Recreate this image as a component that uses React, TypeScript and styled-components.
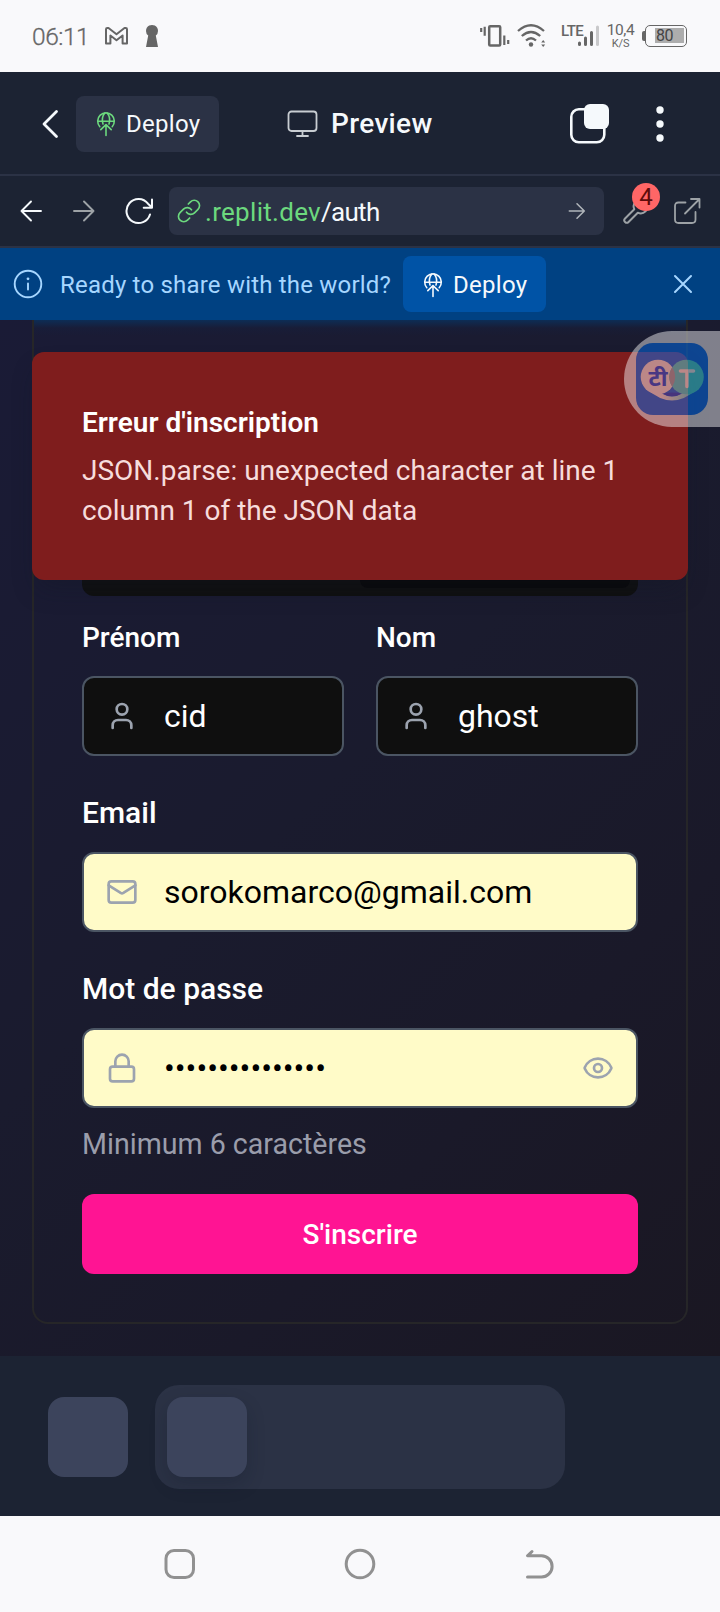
import React from 'react';
import styled, { createGlobalStyle } from 'styled-components';
import { Eye, Lock, Mail, User } from 'lucide-react';

const GlobalStyle = createGlobalStyle`
  * { box-sizing: border-box; }
  body { margin: 0; background: #f9f9fb; font-family: Roboto, "Liberation Sans", sans-serif; }
  svg { display: block; flex: none; }
  p, h1 { margin: 0; }
  button { font: inherit; border: 0; margin: 0; padding: 0; background: none; color: inherit; }
`;

const Screen = styled.div`
  width: 720px;
  height: 1612px;
  display: flex;
  flex-direction: column;
  overflow: hidden;
`;

/* ---------- system status bar ---------- */

const StatusBar = styled.div`
  height: 72px;
  padding: 0 33px 0 32px;
  display: flex;
  align-items: center;
  background: #f9f9fb;
  color: #666;
`;

const Clock = styled.span`
  width: 58px;
  padding-top: 1px;
  font-size: 24.5px;
  line-height: 28px;
  letter-spacing: -0.45px;
  font-weight: 300;
  -webkit-text-stroke: 0.3px #666;
`;

const StatusGroup = styled.div<{ $gap: number; $left?: string }>`
  display: flex;
  align-items: center;
  gap: ${(p) => p.$gap}px;
  margin-left: ${(p) => p.$left ?? '0'};
`;

const Network = styled.div`
  width: 38px;
  height: 24px;
  display: flex;
  align-items: flex-start;
  font-size: 15px;
  line-height: 15px;
  font-weight: 500;
  svg { margin: 1px 0 0 -7px; }
`;

const NetworkLabel = styled.span`
  width: 23px;
  letter-spacing: -0.6px;
`;

const Speed = styled.div`
  width: 27px;
  height: 26px;
  display: flex;
  flex-direction: column;
  align-items: center;
  font-size: 15.5px;
  line-height: 15px;
  font-weight: 400;
  letter-spacing: -0.4px;
  small { font-size: 11px; line-height: 11px; letter-spacing: -0.1px; }
`;

const Battery = styled.div`
  display: flex;
  align-items: center;
  &::before {
    content: '';
    width: 3px;
    height: 10px;
    border-radius: 2px 0 0 2px;
    background: #666;
  }
`;

const BatteryBody = styled.div`
  width: 42px;
  height: 22px;
  padding: 2px 2px 2px 9px;
  border: 1.5px solid #666;
  border-radius: 5px;
`;

const BatteryLevel = styled.div`
  height: 15px;
  padding-left: 1px;
  background: #adadad;
  color: #444;
  font-size: 16px;
  line-height: 15px;
  letter-spacing: -0.4px;
`;

/* ---------- workspace header ---------- */

const Header = styled.header`
  height: 104px;
  padding: 1px 52px 0 40px;
  display: flex;
  align-items: center;
  background: #1c2333;
  border-bottom: 2px solid #2b3245;
  color: #f5f9fc;
`;

const DeployButton = styled.button<{ $primary?: boolean }>`
  width: 143px;
  height: 56px;
  padding: 1px 0 0 20px;
  display: flex;
  align-items: center;
  gap: 10px;
  border-radius: 8px;
  font-size: 24px;
  line-height: 28px;
  letter-spacing: 0.3px;
  color: #f5f9fc;
  background: ${(p) => (p.$primary ? '#0053a6' : '#2b3245')};
`;

const PaneTitle = styled.div`
  margin-left: 68px;
  padding-top: 1px;
  display: flex;
  align-items: center;
  gap: 12px;
  font-size: 28px;
  line-height: 32px;
  font-weight: 500;
  letter-spacing: 0.35px;
  flex: 1;
`;

const HeaderActions = styled.div`
  display: flex;
  align-items: center;
  gap: 42px;
`;

/* ---------- address row ---------- */

const AddressBar = styled.nav`
  height: 72px;
  padding: 0 18px;
  display: flex;
  align-items: center;
  background: #1c2333;
  border-bottom: 2px solid #2b3245;
  color: #f5f9fc;
`;

const NavIcons = styled.div`
  width: 151px;
  display: flex;
  align-items: center;
  gap: 27px;
`;

const UrlField = styled.div`
  width: 435px;
  height: 48px;
  padding: 0 17px 0 8px;
  display: flex;
  align-items: center;
  border-radius: 8px;
  background: #2b3245;
  font-size: 26px;
  line-height: 32px;
  letter-spacing: -0.7px;
`;

const UrlText = styled.span`
  margin-left: 4px;
  padding-top: 1px;
  flex: 1;
  white-space: nowrap;
`;

const Host = styled.span`
  color: #6cd97e;
  letter-spacing: 0.3px;
`;

const Tools = styled.div`
  margin-left: 18px;
  display: flex;
  align-items: center;
  gap: 23px;
  color: #9da2a6;
`;

const ToolWithBadge = styled.div`
  position: relative;
`;

const Badge = styled.span`
  position: absolute;
  left: 10px;
  top: -14px;
  width: 28px;
  height: 28px;
  border-radius: 50%;
  background: #ff6666;
  color: #5e0b0b;
  font-size: 24px;
  line-height: 29px;
  letter-spacing: 0;
  text-align: center;
`;

/* ---------- share banner ---------- */

const Banner = styled.div`
  height: 72px;
  padding: 0 27px 0 13px;
  display: flex;
  align-items: center;
  background: #004182;
  color: #a6d6ff;
  font-size: 24px;
  line-height: 28px;
`;

const BannerText = styled.p`
  width: 343px;
  margin: 0 0 0 17px;
  padding-top: 1px;
  letter-spacing: 0.2px;
  white-space: nowrap;
`;

const BannerClose = styled.button`
  margin-left: auto;
`;

/* ---------- previewed page ---------- */

const Page = styled.main`
  position: relative;
  height: 1036px;
  padding: 0 32px 32px;
  background: linear-gradient(135deg, #1a1b36 0%, #1a1b2e 45%, #1a1929 72%, #1a1722 100%);
`;

const Card = styled.section`
  height: 1004px;
  border: solid #262628;
  border-width: 0 2px 2px;
  border-radius: 0 0 16px 16px;
  display: flex;
  flex-direction: column;
`;

const CardGlow = styled.div`
  height: 16px;
  background: linear-gradient(#0d2d55, rgba(22, 31, 60, 0.5) 50%, rgba(26, 27, 47, 0));
`;

const TabList = styled.div`
  height: 60px;
  margin: 200px 48px 0;
  padding: 8px;
  display: flex;
  justify-content: flex-end;
  border-radius: 12px;
  background: #0f0f0f;
`;

const ActiveTab = styled.div`
  width: 270px;
  border-radius: 8px;
  background: #080809;
`;

const Form = styled.form`
  padding: 26px 48px 47px;
  display: flex;
  flex-direction: column;
`;

const NameRow = styled.div`
  display: grid;
  grid-template-columns: 1fr 1fr;
  gap: 32px;
`;

const Field = styled.div<{ $large?: boolean }>`
  display: flex;
  flex-direction: column;
  gap: ${(p) => (p.$large ? 23 : 22)}px;
  margin-top: ${(p) => (p.$large ? 41 : 0)}px;
`;

const Label = styled.label<{ $large?: boolean }>`
  font-size: ${(p) => (p.$large ? 30 : 28)}px;
  line-height: 32px;
  font-weight: 500;
  color: #fff;
`;

const InputBox = styled.div<{ $filled?: boolean }>`
  height: 80px;
  padding: 0 22px;
  display: flex;
  align-items: center;
  border: 2px solid #4b5563;
  border-radius: 12px;
  background: ${(p) => (p.$filled ? '#fffbc8' : '#0f0f0f')};
  color: ${(p) => (p.$filled ? '#000' : '#fff')};
  font-size: 32px;
  line-height: 40px;
  svg { color: #9ca3af; }
`;

const Value = styled.span`
  margin-left: 26px;
  flex: 1;
  white-space: nowrap;
`;

const Hint = styled.p`
  margin-top: 16px;
  font-size: 28.6px;
  line-height: 40px;
  color: #9a9dab;
`;

const Submit = styled.button`
  height: 80px;
  margin-top: 30px;
  padding-top: 2px;
  border-radius: 12px;
  background: #ff1493;
  color: #fff;
  font-size: 28px;
  line-height: 40px;
  font-weight: 500;
`;

const Toast = styled.div`
  position: absolute;
  left: 32px;
  top: 32px;
  width: 656px;
  height: 228px;
  padding: 51px 50px 49px;
  border-radius: 12px;
  background: #7f1d1d;
  box-shadow: 0 14px 24px -6px rgba(18, 22, 36, 0.35);
  display: flex;
  flex-direction: column;
  gap: 8px;
  font-size: 28px;
  line-height: 40px;
  color: #f6dcdc;
`;

const ToastTitle = styled.h1`
  font-size: 28px;
  line-height: 40px;
  font-weight: 600;
  color: #fff;
`;

const Translator = styled.div`
  position: absolute;
  right: 0;
  top: 11px;
  width: 96px;
  height: 96px;
  padding: 12px;
  border-radius: 48px 0 0 48px;
  background: #f2f2f4;
  opacity: 0.47;
`;

/* ---------- bottom bars ---------- */

const Dock = styled.div`
  height: 160px;
  padding: 2px 48px 0;
  display: flex;
  align-items: center;
  gap: 27px;
  background: #1c2333;
`;

const DockTile = styled.div<{ $raised?: boolean }>`
  width: 80px;
  height: 80px;
  border-radius: 16px;
  background: #3c445c;
  box-shadow: ${(p) => (p.$raised ? '0 8px 18px rgba(14, 21, 37, 0.22)' : 'none')};
`;

const DockTray = styled.div`
  width: 410px;
  height: 104px;
  padding: 12px;
  border-radius: 24px;
  background: #2b3245;
`;

const SystemNav = styled.div`
  height: 96px;
  padding: 0 164px;
  display: flex;
  align-items: center;
  justify-content: space-between;
  background: #f9f9fb;
`;

/* ---------- drawings ---------- */

const DeployIcon = ({ color }: { color: string }) => (
  <svg width="20" height="26" viewBox="0 0 20 26" fill="none" stroke={color} strokeWidth="1.6" strokeLinecap="round" strokeLinejoin="round">
    <path d="M3.800 15.700A8.300 8.300 0 1 1 16.200 15.700" />
    <path d="M1.900 10.200h16.200" />
    <path d="M7 13C5.900 9.500 6.400 5 8.600 2.200M13 13C14.100 9.500 13.600 5 11.400 2.200" />
    <path d="M10 24.500V13.600M4.800 18.600L10 13.600l5.200 5" />
  </svg>
);

const GmailIcon = () => (
  <svg width="23" height="18" viewBox="0 0 23 18" fill="none" stroke="#666" strokeWidth="2" strokeLinejoin="round">
    <path d="M1 2.300Q1 1 2.300 1H3.500L11.500 7.200 19.500 1H20.700Q22 1 22 2.300V16.500H17.600V8.500L11.500 13.200 5.400 8.500V16.500H1Z" />
  </svg>
);

const KeyholeIcon = () => (
  <svg width="12" height="22" viewBox="0 0 12 22" fill="#666">
    <path d="M3.200 0.600Q6-.6 8.800.600 12 2.400 12 6 12 9 9.800 10.500L12 22H0L2.200 10.500Q0 9 0 6 0 2.400 3.200.600Z" />
  </svg>
);

const VibrateIcon = () => (
  <svg width="30" height="24" viewBox="0 0 30 24" fill="none" stroke="#666">
    <rect x="9.200" y="2.200" width="11" height="19.300" rx="1" strokeWidth="2.500" />
    <path d="M1.200 4v4M4.700 2.800v9M24.300 11.500v9.500M28.200 16v4" strokeWidth="2.200" />
  </svg>
);

const WifiIcon = () => (
  <svg width="30" height="24" viewBox="0 0 30 24" fill="none" stroke="#666" strokeWidth="2.300">
    <path d="M1 7Q14-4.500 27 7M4.800 12Q14 4 23.200 12M9 16.500Q14 12 19 16.500" />
    <circle cx="14" cy="20.500" r="2.200" fill="#666" stroke="none" />
    <path d="M24.200 18.500l2-2.500 2 2.500zM24.200 20.500l2 2.500 2-2.500z" fill="#666" stroke="none" />
  </svg>
);

const SignalIcon = () => (
  <svg width="22" height="22" viewBox="0 0 22 22" stroke="#666" strokeWidth="3" strokeLinecap="round">
    <path d="M2.500 18v1.500M8.500 13v6.500M14.500 7.500v12" />
    <path d="M20.500 2v17.500" stroke="#c9c9cb" />
  </svg>
);

const BackChevron = () => (
  <svg width="20" height="30" viewBox="0 0 20 30" fill="none" stroke="#f5f9fc" strokeWidth="2.800" strokeLinecap="round" strokeLinejoin="round">
    <path d="M16.500 2.500L4 15l12.500 12.500" />
  </svg>
);

const MonitorIcon = () => (
  <svg width="32" height="28" viewBox="0 0 32 28" fill="none" stroke="#c8cdd2" strokeWidth="1.800" strokeLinecap="round">
    <rect x="1.500" y="1.500" width="28" height="19.500" rx="3" />
    <path d="M15.500 21v4.700M10 26h11" />
  </svg>
);

const TabsIcon = () => (
  <svg width="40" height="40" viewBox="0 0 40 40">
    <rect x="1.300" y="5.300" width="33" height="33" rx="7.500" fill="none" stroke="#f5f9fc" strokeWidth="2.600" />
    <rect x="14" y="0" width="25" height="25" rx="6" fill="#f5f9fc" />
  </svg>
);

const MoreIcon = () => (
  <svg width="16" height="40" viewBox="0 0 16 40" fill="#f5f9fc">
    <circle cx="8" cy="6" r="3.700" />
    <circle cx="8" cy="20" r="3.700" />
    <circle cx="8" cy="34" r="3.700" />
  </svg>
);

const Arrow = ({ size, color, flip, width = 1.9 }: { size: number; color: string; flip?: boolean; width?: number }) => (
  <svg width={size} height={size} viewBox="0 0 26 26" fill="none" stroke={color} strokeWidth={width} strokeLinecap="round" strokeLinejoin="round">
    <path d={flip ? 'M23 13H3.500M13 3.500L3.500 13l9.500 9.500' : 'M3 13h19.500M13 3.500l9.500 9.500-9.500 9.500'} />
  </svg>
);

const ReloadIcon = () => (
  <svg width="30" height="28" viewBox="0 0 30 28" fill="none" stroke="#f5f9fc" strokeWidth="2" strokeLinecap="round" strokeLinejoin="round">
    <path d="M26 17.500A12 12 0 1 1 24 6.700L28 10.500M28 2.500v8.200h-8.300" />
  </svg>
);

const LinkIcon = () => (
  <svg width="24" height="24" viewBox="0 0 24 24" fill="none" stroke="#6cd97e" strokeWidth="1.650" strokeLinecap="round" strokeLinejoin="round">
    <path d="M9.500 13.200a5.300 5.300 0 0 0 8 .600l3.500-3.500a5.300 5.300 0 0 0-7.500-7.500l-2.200 2.200" />
    <path d="M14.500 10.800a5.300 5.300 0 0 0-8-.600L3 13.700a5.300 5.300 0 0 0 7.500 7.500l2.200-2.200" />
  </svg>
);

const WrenchIcon = () => (
  <svg width="28" height="28" viewBox="0 0 24 24" fill="none" stroke="currentColor" strokeWidth="1.700" strokeLinecap="round" strokeLinejoin="round">
    <path d="M14.700 6.300a1 1 0 0 0 0 1.400l1.600 1.600a1 1 0 0 0 1.400 0l3.770-3.770a6 6 0 0 1-7.940 7.940l-7.910 7.910a2.120 2.120 0 0 1-3-3l7.910-7.910a6 6 0 0 1 7.940-7.940z" />
  </svg>
);

const ExternalIcon = () => (
  <svg width="28" height="28" viewBox="0 0 28 28" fill="none" stroke="currentColor" strokeWidth="1.800" strokeLinecap="round" strokeLinejoin="round">
    <path d="M12.500 5.500H5.500Q2 5.500 2 9v13.500Q2 26 5.500 26H19q3.500 0 3.500-3.500v-7.500M18 2h8.500v8.500M26.500 2L12 16.500" />
  </svg>
);

const InfoIcon = () => (
  <svg width="30" height="30" viewBox="0 0 30 30" fill="none" stroke="#a6d6ff" strokeWidth="1.900" strokeLinecap="round">
    <circle cx="15" cy="15" r="13.300" />
    <path d="M15 14.500v6" />
    <circle cx="15" cy="9.800" r="1.400" fill="#a6d6ff" stroke="none" />
  </svg>
);

const CloseIcon = () => (
  <svg width="20" height="20" viewBox="0 0 20 20" stroke="#a6d6ff" strokeWidth="2" strokeLinecap="round">
    <path d="M2 2l16 16M18 2L2 18" />
  </svg>
);

const TranslateLogo = () => (
  <svg width="72" height="72" viewBox="0 0 72 72">
    <defs>
      <linearGradient id="swoosh" x1="0" x2="1">
        <stop offset="0.3" stopColor="#fff" />
        <stop offset="1" stopColor="#3ee8ee" />
      </linearGradient>
    </defs>
    <rect width="72" height="72" rx="17" fill="#0074ff" />
    <path d="M11 46Q36 69 61 46L47 50Q36 57 25 50Z" fill="url(#swoosh)" />
    <path d="M26 50.500Q36 48.500 46 50.500 36 56 26 50.500Z" fill="#0a4fe8" />
    <circle cx="22" cy="34" r="17.300" fill="#fff" />
    <circle cx="50.500" cy="34" r="17.300" fill="#3ee8ee" />
    <path d="M36.200 24.300a17.300 17.300 0 0 1 0 19.400 17.300 17.300 0 0 1 0-19.400z" fill="#9fb4c4" />
    <text x="22" y="43" textAnchor="middle" fontFamily='"Noto Sans Devanagari", "Noto Sans", sans-serif' fontWeight="700" fontSize="23" fill="#0b55f5">टी</text>
    <path d="M44.500 28h13M51 28V43.500" stroke="#fff" strokeWidth="3.600" strokeLinecap="round" fill="none" />
  </svg>
);

const RecentsIcon = () => (
  <svg width="32" height="32" viewBox="0 0 32 32" fill="none" stroke="#919191" strokeWidth="3">
    <rect x="2" y="2.500" width="27.500" height="27" rx="8" />
  </svg>
);

const HomeIcon = () => (
  <svg width="32" height="32" viewBox="0 0 32 32" fill="none" stroke="#919191" strokeWidth="3">
    <circle cx="16" cy="16" r="13.800" />
  </svg>
);

const ReturnIcon = () => (
  <svg width="32" height="32" viewBox="0 0 32 32" fill="none" stroke="#919191" strokeWidth="3" strokeLinecap="round" strokeLinejoin="round">
    <path d="M8 3.500L3.500 7.800H17.500A10.600 10.600 0 0 1 17.500 29H3.500" />
  </svg>
);

const SECRET_LENGTH = 15;

export default function App() {
  return (
    <>
      <GlobalStyle />
      <Screen>
        <StatusBar>
          <Clock>06:11</Clock>
          <StatusGroup $gap={18} $left="15px">
            <GmailIcon />
            <KeyholeIcon />
          </StatusGroup>
          <StatusGroup $gap={7} $left="auto">
            <VibrateIcon />
            <WifiIcon />
            <StatusGroup $gap={8} $left="7px">
              <Network>
                <NetworkLabel>LTE</NetworkLabel>
                <SignalIcon />
              </Network>
              <Speed>
                10,4
                <small>K/S</small>
              </Speed>
              <Battery>
                <BatteryBody>
                  <BatteryLevel>80</BatteryLevel>
                </BatteryBody>
              </Battery>
            </StatusGroup>
          </StatusGroup>
        </StatusBar>

        <Header>
          <BackChevron />
          <StatusGroup $gap={0} $left="16px">
            <DeployButton>
              <DeployIcon color="#6cd97e" />
              Deploy
            </DeployButton>
          </StatusGroup>
          <PaneTitle>
            <MonitorIcon />
            Preview
          </PaneTitle>
          <HeaderActions>
            <TabsIcon />
            <MoreIcon />
          </HeaderActions>
        </Header>

        <AddressBar>
          <NavIcons>
            <Arrow size={26} color="#f5f9fc" flip />
            <Arrow size={26} color="#9da2a6" />
            <ReloadIcon />
          </NavIcons>
          <UrlField>
            <LinkIcon />
            <UrlText>
              <Host>.replit.dev</Host>/auth
            </UrlText>
            <Arrow size={20} color="#b0b5ba" width={2} />
          </UrlField>
          <Tools>
            <ToolWithBadge>
              <WrenchIcon />
              <Badge>4</Badge>
            </ToolWithBadge>
            <ExternalIcon />
          </Tools>
        </AddressBar>

        <Banner>
          <InfoIcon />
          <BannerText>Ready to share with the world?</BannerText>
          <DeployButton $primary>
            <DeployIcon color="#f5f9fc" />
            Deploy
          </DeployButton>
          <BannerClose aria-label="Close">
            <CloseIcon />
          </BannerClose>
        </Banner>

        <Page>
          <Card>
            <CardGlow />
            <TabList>
              <ActiveTab />
            </TabList>
            <Form>
              <NameRow>
                <Field>
                  <Label>Prénom</Label>
                  <InputBox>
                    <User size={32} />
                    <Value>cid</Value>
                  </InputBox>
                </Field>
                <Field>
                  <Label>Nom</Label>
                  <InputBox>
                    <User size={32} />
                    <Value>ghost</Value>
                  </InputBox>
                </Field>
              </NameRow>
              <Field $large>
                <Label $large>Email</Label>
                <InputBox $filled>
                  <Mail size={32} />
                  <Value>sorokomarco@gmail.com</Value>
                </InputBox>
              </Field>
              <Field $large>
                <Label $large>Mot de passe</Label>
                <InputBox $filled>
                  <Lock size={32} />
                  <Value>{'•'.repeat(SECRET_LENGTH)}</Value>
                  <Eye size={32} />
                </InputBox>
              </Field>
              <Hint>Minimum 6 caractères</Hint>
              <Submit type="button">S'inscrire</Submit>
            </Form>
          </Card>
          <Toast>
            <ToastTitle>Erreur d'inscription</ToastTitle>
            <p>JSON.parse: unexpected character at line 1 column 1 of the JSON data</p>
          </Toast>
          <Translator>
            <TranslateLogo />
          </Translator>
        </Page>

        <Dock>
          <DockTile />
          <DockTray>
            <DockTile $raised />
          </DockTray>
        </Dock>

        <SystemNav>
          <RecentsIcon />
          <HomeIcon />
          <ReturnIcon />
        </SystemNav>
      </Screen>
    </>
  );
}
